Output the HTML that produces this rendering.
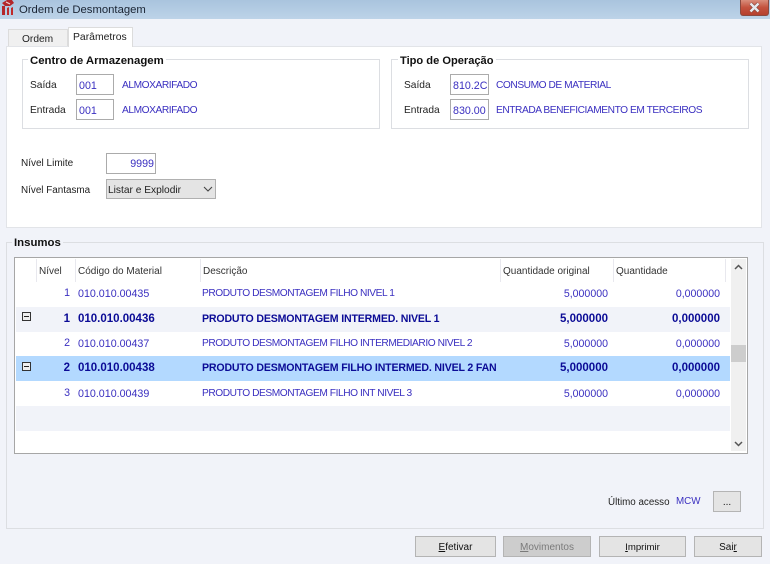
<!DOCTYPE html>
<html><head><meta charset="utf-8"><style>
html,body{margin:0;padding:0}
body{width:770px;height:564px;overflow:hidden;position:relative;background:#f1f3f9;font:10.2px "Liberation Sans",sans-serif;color:#222}
div,span{position:absolute;box-sizing:border-box}
.t{white-space:nowrap;line-height:14px}
.b{color:#3a2fc0}
.u{font-size:10.2px;letter-spacing:-.44px}
.n{font-size:10.6px}
.c{font-size:10.7px}
.bb{color:#0b0b96;font-weight:bold}
.bu{font-size:10.6px;letter-spacing:-.17px}
.bn{font-size:11.5px}
.grp{border:1px solid #dcdee2}
.leg{font-weight:bold;font-size:11.4px;color:#111;white-space:nowrap;background:#f1f3f9;padding:0 2px;line-height:14px}
.inp{border:1px solid #ababab;background:#fff;color:#3a2fc0;line-height:22px;padding-left:2px;font-size:10.7px;white-space:nowrap;overflow:hidden}
.btn{background:#e4e4e4;border:1px solid #b4b4b4;text-align:center;line-height:21px;font-size:10px;color:#111}
.hd{top:259px;height:23px;border-left:1px solid #e8e8ee;line-height:25px;padding-left:2px;white-space:nowrap;font-size:10px;color:#333}
.row{left:16px;width:714px;height:25px}
.r{text-align:right}
.pl{left:22px;width:9px;height:9px;border:1px solid #333;background:#eee}
.pl:after{content:"";position:absolute;left:1px;right:1px;top:3px;height:1px;background:#222}
</style></head><body>
<div style="left:0;top:0;width:770px;height:19px;background:linear-gradient(#a9c4de,#bdd3e8)"></div>
<svg style="position:absolute;left:1px;top:0" width="14" height="16" viewBox="0 0 14 16"><path d="M1 3L6 0H11L13 3L9 6H4Z" fill="#b3262a"/><path d="M5 2L9 4" stroke="#f0d0d0" stroke-width="1.2"/><path d="M1 6H4V15H1Z" fill="#b3262a"/><path d="M6 8L8 7V15H6ZM10 8L12 7V15H10Z" fill="#c02a2a"/></svg>
<div class="t" style="left:19px;top:3px;font-size:11.3px;color:#1a2433">Ordem de Desmontagem</div>
<div style="left:740px;top:0;width:29px;height:16px;background:linear-gradient(#d98e7c,#c4523e 50%,#b5402e);border:1px solid #8a4a40;border-top:0;border-radius:0 0 3px 3px"></div>
<svg style="position:absolute;left:748px;top:2px" width="13" height="11" viewBox="0 0 13 11"><path d="M2.5 1.5L10.5 9.5M10.5 1.5L2.5 9.5" stroke="#7a3a30" stroke-width="3.6"/><path d="M2.5 1.5L10.5 9.5M10.5 1.5L2.5 9.5" stroke="#e6e9ec" stroke-width="2.6"/></svg>

<div style="left:8px;top:29px;width:60px;height:18px;background:#f0f0f0;border:1px solid #dcdcdc;border-bottom:0"></div>
<div class="t" style="left:22px;top:33px;font-size:10.2px">Ordem</div>
<div style="left:6px;top:46px;width:756px;height:182px;background:#fff;border:1px solid #e2e4e8"></div>
<div style="left:68px;top:27px;width:65px;height:20px;background:#fff;border:1px solid #dcdcdc;border-bottom:0"></div>
<div class="t" style="left:73px;top:31px;font-size:10.4px">Parâmetros</div>

<div class="grp" style="left:22px;top:59px;width:358px;height:70px"></div>
<div class="leg" style="left:28px;top:54px;background:#fff">Centro de Armazenagem</div>
<div class="t" style="left:30px;top:79px">Saída</div>
<div class="t" style="left:30px;top:104px">Entrada</div>
<div class="inp" style="left:76px;top:74px;width:38px;height:21px">001</div>
<div class="inp" style="left:76px;top:99px;width:38px;height:21px">001</div>
<div class="t b u" style="left:122px;top:79px">ALMOXARIFADO</div>
<div class="t b u" style="left:122px;top:104px">ALMOXARIFADO</div>

<div class="grp" style="left:391px;top:59px;width:358px;height:70px"></div>
<div class="leg" style="left:398px;top:54px;background:#fff;font-size:11.1px">Tipo de Operação</div>
<div class="t" style="left:404px;top:79px">Saída</div>
<div class="t" style="left:404px;top:104px">Entrada</div>
<div class="inp" style="left:450px;top:74px;width:39px;height:21px">810.2C</div>
<div class="inp" style="left:450px;top:99px;width:39px;height:21px">830.00</div>
<div class="t b u" style="left:496px;top:79px">CONSUMO DE MATERIAL</div>
<div class="t b u" style="left:496px;top:104px">ENTRADA BENEFICIAMENTO EM TERCEIROS</div>

<div class="t" style="left:21px;top:157px;font-size:10px">Nível Limite</div>
<div class="inp" style="left:106px;top:153px;width:50px;height:21px;text-align:right;padding-right:1px;line-height:20px">9999</div>
<div class="t" style="left:21px;top:184px;font-size:9.9px">Nível Fantasma</div>
<div style="left:106px;top:179px;width:110px;height:20px;background:#e4e4e4;border:1px solid #b0b0b0"></div>
<div class="t" style="left:108px;top:184px;font-size:10.2px">Listar e Explodir</div>
<svg style="position:absolute;left:203px;top:186px" width="10" height="7" viewBox="0 0 10 7"><path d="M1 1L5 5L9 1" fill="none" stroke="#444" stroke-width="1.1"/></svg>

<div class="grp" style="left:6px;top:242px;width:758px;height:287px"></div>
<div class="leg" style="left:12px;top:236px">Insumos</div>

<div style="left:14px;top:257px;width:734px;height:197px;background:#fff;border:1px solid #a6a6a6"></div>
<div class="hd" style="left:36px">Nível</div>
<div class="hd" style="left:75px">Código do Material</div>
<div class="hd" style="left:200px">Descrição</div>
<div class="hd" style="left:500px">Quantidade original</div>
<div class="hd" style="left:613px">Quantidade</div>
<div class="hd" style="left:725px;width:1px;padding:0"></div>

<div class="row" style="top:307px;background:#f1f3f9"></div>
<div class="row" style="top:356px;height:25px;background:#b3d9ff"></div>
<div class="row" style="top:406px;background:#f1f3f9"></div>

<div class="t b r n" style="left:40px;width:30px;top:286px">1</div>
<div class="t b c" style="left:78px;top:287px">010.010.00435</div>
<div class="t b u" style="left:202px;top:287px">PRODUTO DESMONTAGEM FILHO NIVEL 1</div>
<div class="t b r n" style="left:500px;width:108px;top:287px">5,000000</div>
<div class="t b r n" style="left:612px;width:108px;top:287px">0,000000</div>

<div class="pl" style="top:312px"></div>
<div class="t bb r bn" style="left:40px;width:30px;top:312px">1</div>
<div class="t bb bn" style="left:78px;top:312px">010.010.00436</div>
<div class="t bb bu" style="left:202px;top:312px">PRODUTO DESMONTAGEM INTERMED. NIVEL 1</div>
<div class="t bb r bn" style="left:500px;width:108px;top:312px">5,000000</div>
<div class="t bb r bn" style="left:612px;width:108px;top:312px">0,000000</div>

<div class="t b r n" style="left:40px;width:30px;top:336px">2</div>
<div class="t b c" style="left:78px;top:337px">010.010.00437</div>
<div class="t b u" style="left:202px;top:337px">PRODUTO DESMONTAGEM FILHO INTERMEDIARIO NIVEL 2</div>
<div class="t b r n" style="left:500px;width:108px;top:337px">5,000000</div>
<div class="t b r n" style="left:612px;width:108px;top:337px">0,000000</div>

<div class="pl" style="top:362px"></div>
<div class="t bb r bn" style="left:40px;width:30px;top:361px">2</div>
<div class="t bb bn" style="left:78px;top:361px">010.010.00438</div>
<div class="t bb bu" style="left:202px;top:361px">PRODUTO DESMONTAGEM FILHO INTERMED. NIVEL 2 FAN</div>
<div class="t bb r bn" style="left:500px;width:108px;top:361px">5,000000</div>
<div class="t bb r bn" style="left:612px;width:108px;top:361px">0,000000</div>

<div class="t b r n" style="left:40px;width:30px;top:386px">3</div>
<div class="t b c" style="left:78px;top:387px">010.010.00439</div>
<div class="t b u" style="left:202px;top:387px">PRODUTO DESMONTAGEM FILHO INT NIVEL 3</div>
<div class="t b r n" style="left:500px;width:108px;top:387px">5,000000</div>
<div class="t b r n" style="left:612px;width:108px;top:387px">0,000000</div>

<div style="left:731px;top:259px;width:15px;height:192px;background:#f0f0f0"></div>
<div style="left:731px;top:345px;width:15px;height:17px;background:#cdcdcd"></div>
<svg style="position:absolute;left:734px;top:264px" width="9" height="7" viewBox="0 0 9 7"><path d="M1 5L4.5 1.5L8 5" fill="none" stroke="#555" stroke-width="1.5"/></svg>
<svg style="position:absolute;left:734px;top:440px" width="9" height="7" viewBox="0 0 9 7"><path d="M1 2L4.5 5.5L8 2" fill="none" stroke="#555" stroke-width="1.5"/></svg>

<div class="t" style="left:608px;top:496px;font-size:9.8px">Último acesso</div>
<div class="t b" style="left:676px;top:495px;font-size:9.8px">MCW</div>
<div class="btn" style="left:713px;top:491px;width:28px;height:21px">...</div>

<div class="btn" style="left:415px;top:536px;width:81px;height:21px"><u>E</u>fetivar</div>
<div class="btn" style="left:503px;top:536px;width:88px;height:21px;background:#cdcdcd;color:#7a7a7a"><u>M</u>ovimentos</div>
<div class="btn" style="left:599px;top:536px;width:87px;height:21px;font-size:9.6px"><u>I</u>mprimir</div>
<div class="btn" style="left:694px;top:536px;width:68px;height:21px">Sai<u>r</u></div>
</body></html>
